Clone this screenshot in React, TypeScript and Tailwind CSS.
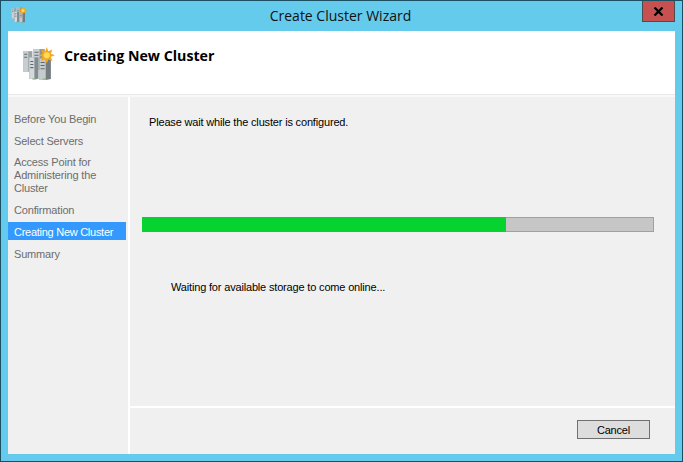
const steps = [
  { label: "Before You Begin", cls: "h-[22px] pl-[6px] pt-[4px]" },
  { label: "Select Servers", cls: "h-[22px] pl-[6px] pt-[4px]" },
  { label: "Access Point for Administering the Cluster", cls: "h-[47px] pl-[6px] pt-[3px] pr-[4px]" },
  { label: "Confirmation", cls: "h-[22px] pl-[6px] pt-[4px]" },
  { label: "Creating New Cluster", cls: "h-[18px] pl-[6px] pt-[4px] bg-[#3399ff] text-white tracking-[-0.27px] mb-[4px]" },
  { label: "Summary", cls: "h-[22px] pl-[6px] pt-[4px]" },
];

// server rack with the yellow burst, used big in the header and small in the title bar
const ClusterIcon = ({ className }: { className: string }) => (
  <svg viewBox="0 0 34 34" className={className}>
    <path d="M3 5h9v20H3z" fill="#9aa2a6" />
    <path d="M3 5h5v20H3z" fill="#c8ced0" />
    <path d="M13 3h11v20H13z" fill="#8d969b" />
    <path d="M13 3h6v20h-6z" fill="#ccd2d4" />
    <path d="M9 11h9v21H9z" fill="#828b90" />
    <path d="M9 11h5v21H9z" fill="#d4d9db" />
    <path d="M19 12h11v20l-5 1h-6z" fill="#737c81" />
    <path d="M19 12h6v21h-6z" fill="#c6ccce" />
    <path d="M10 15h3M10 18h3M10 21h3M20 16h4M20 19h4M20 22h4M4 8h3M4 11h3M14 6h4M14 9h4" stroke="#5f686c" strokeWidth="1" />
    <path d="M12 32h4M22 32h3" stroke="#7fb069" strokeWidth="1" />
    <path d="M26 1l1.500 4 4-1.500-1.500 4 4 1.500-4 1.500 1.500 4-4-1.500-1.500 4-1.500-4-4 1.500 1.500-4-4-1.500 4-1.500-1.500-4 4 1.500z" fill="#f5a81c" />
    <circle cx="26" cy="9" r="3" fill="#ffd95a" />
  </svg>
);

export default function App() {
  return (
    <div className="w-[683px] h-[462px] flex flex-col bg-[#65cbec] border border-[#1d4f63] font-['Liberation_Sans','Noto_Sans',sans-serif] tracking-[-0.17px] overflow-hidden">
      {/* Barre de titre */}
      <div className="h-[30px] shrink-0 flex items-start">
        <ClusterIcon className="w-[17px] h-[17px] ml-[9px] mt-[5px]" />
        <div className="flex-1 text-center text-[14px] leading-[20px] mt-[5px] text-[#111] font-['Open_Sans',sans-serif] tracking-normal pl-[12px]">Create Cluster Wizard</div>
        <div className="w-[33px] h-[21px] mr-[7px] bg-[#c75050] border border-[#4d4d4d] border-t-0 flex items-center justify-center">
          <svg viewBox="0 0 11 9" className="w-[11px] h-[9px]">
            <path d="M1.500 0.500L9.500 8.500M9.500 0.500L1.500 8.500" stroke="#000" strokeWidth="2.200" />
          </svg>
        </div>
      </div>

      <div className="flex-1 mx-[7px] mb-[7px] flex flex-col min-h-0">
        {/* Encabezado */}
        <div className="h-[64px] shrink-0 bg-white flex items-start border-b border-[#e8e8e8]">
          <ClusterIcon className="w-[35px] h-[35px] ml-[12px] mt-[15px]" />
          <div className="ml-[9px] mt-[15px] text-[14.200px] leading-[20px] font-bold text-black font-['Open_Sans',sans-serif] tracking-normal">Creating New Cluster</div>
        </div>
        <div className="h-[2px] shrink-0 bg-[#f8f8f8]" />

        <div className="flex-1 flex min-h-0 bg-[#f0f0f0]">
          {/* Pasos */}
          <div className="w-[118px] shrink-0 pt-[12px] text-[11px] leading-[13px] text-[#6d6d6d]">
            {steps.map((step) => (
              <div key={step.label} className={step.cls}>{step.label}</div>
            ))}
          </div>
          <div className="w-[4px] shrink-0 flex justify-end">
            <div className="w-[2px] bg-white" />
          </div>

          <div className="flex-1 flex flex-col min-w-0">
            <div className="flex-1 flex flex-col pt-[18px] pl-[12px] pr-[21px] text-[11px] leading-[14px] text-black">
              <div className="pl-[7px]">Please wait while the cluster is configured.</div>
              <div className="mt-[88px] h-[15px] bg-[#c6c6c6] border border-[#a0a0a0] border-l-0 flex">
                <div className="w-[364px] h-[15px] -mt-px bg-[#06d230]" />
              </div>
              <div className="mt-[48px] pl-[29px]">Waiting for available storage to come online...</div>
            </div>
            <div className="h-[2px] bg-white shrink-0" />
            <div className="h-[46px] shrink-0 flex justify-end items-start pt-[12px] pr-[25px]">
              <div className="w-[73px] h-[19px] pt-[1px] bg-[#dddddd] border border-[#707070] flex items-center justify-center text-[11px] text-black">Cancel</div>
            </div>
          </div>
        </div>
      </div>
    </div>
  );
}
